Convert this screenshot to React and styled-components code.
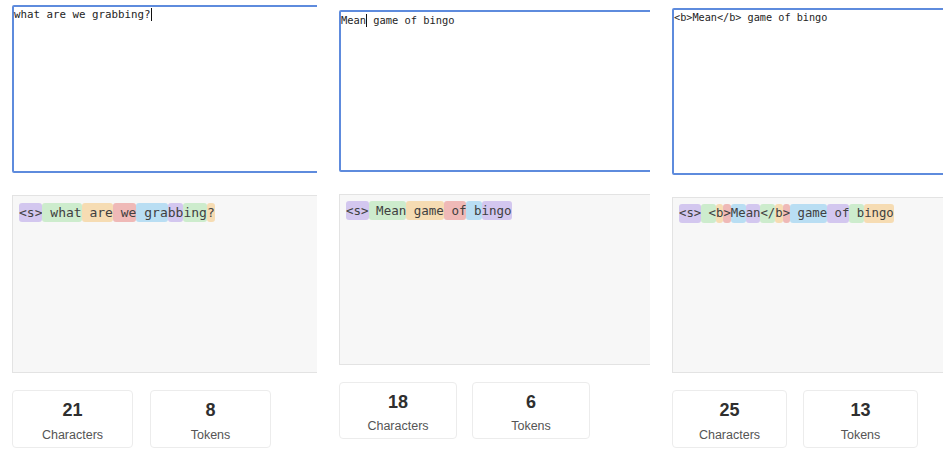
import React from 'react';
import styled, { createGlobalStyle } from 'styled-components';

const Global = createGlobalStyle`
  html, body { margin: 0; padding: 0; background: #ffffff; }
  #root { width: 943px; height: 460px; overflow: hidden; }
`;

const COLORS = ['#d3c7ef', '#cdeccd', '#f6dcb3', '#efb9b7', '#b9def3'];

const Strip = styled.div`
  display: flex;
  align-items: flex-start;
  gap: 22px;
  padding-left: 12px;
  height: 460px;
  box-sizing: border-box;
`;

const Shot = styled.section`
  flex: ${(p) => (p.$w ? `0 0 ${p.$w}px` : '1 1 0')};
  overflow: hidden;
  padding-top: ${(p) => p.$top}px;
`;

const Column = styled.div`
  width: 360px;
  display: flex;
  flex-direction: column;
  gap: 22px;
`;

const Editor = styled.div`
  height: ${(p) => p.$h}px;
  box-sizing: border-box;
  border: 2px solid #5e8bdd;
  border-radius: 2px;
  padding: 1px 0 0 0;
  font-family: 'DejaVu Sans Mono', monospace;
  font-size: ${(p) => p.$font}px;
  line-height: 14px;
  color: #1e1e1e;
  white-space: pre;
  background: #fff;
`;

const Caret = styled.span`
  display: inline-block;
  width: 1px;
  height: 13px;
  background: #111;
  vertical-align: -3px;
`;

const TokenBox = styled.div`
  height: ${(p) => p.$h}px;
  box-sizing: border-box;
  background: #f7f7f7;
  border: 1px solid #e3e3e3;
  padding: ${(p) => p.$pt}px 6px 0 6px;
  font-family: 'DejaVu Sans Mono', monospace;
  font-size: ${(p) => p.$font}px;
  line-height: 19px;
  color: #404040;
  white-space: pre;
`;

const Token = styled.span`
  display: inline-block;
  background: ${(p) => p.$bg};
  border-radius: 3px;
  height: 19px;
`;

const Stats = styled.div`
  display: flex;
  gap: ${(p) => p.$gap}px;
  margin-top: -5px;
`;

const Card = styled.div`
  width: ${(p) => p.$w}px;
  height: ${(p) => p.$h}px;
  box-sizing: border-box;
  border: 1px solid #ececec;
  border-radius: 4px;
  background: #fff;
  display: flex;
  flex-direction: column;
  align-items: center;
  padding-top: 8px;
  font-family: 'Liberation Sans', Arial, sans-serif;
`;

const Num = styled.div`
  font-size: 18px;
  font-weight: 700;
  color: #2f2f2f;
  line-height: 22px;
`;

const Label = styled.div`
  font-size: 12.5px;
  color: #555;
  line-height: 16px;
  margin-top: ${(p) => p.$mt}px;
`;

const panels = [
  {
    w: 305, top: 5, editorH: 168, editorFont: 10.8,
    before: 'what are we grabbing?', after: '', caret: true,
    tokens: ['<s>', ' what', ' are', ' we', ' gra', 'bb', 'ing', '?'],
    tokenFont: 13, boxH: 178, pt: 7,
    cardW: 121, cardH: 58, cardGap: 17, labelMt: 6,
    chars: 21, count: 8,
  },
  {
    w: 311, top: 10, editorH: 162, editorFont: 10.4,
    before: 'Mean', after: ' game of bingo', caret: true,
    tokens: ['<s>', ' Mean', ' game', ' of', ' b', 'ingo'],
    tokenFont: 12.5, boxH: 171, pt: 6,
    cardW: 118, cardH: 57, cardGap: 15, labelMt: 5,
    chars: 18, count: 6,
  },
  {
    w: 0, top: 8, editorH: 167, editorFont: 10.2,
    before: '<b>Mean</b> game of bingo', after: '', caret: false,
    tokens: ['<s>', ' <', 'b', '>', 'Me', 'an', '</', 'b', '>', ' game', ' of', ' b', 'ingo'],
    tokenFont: 12.3, boxH: 176, pt: 6,
    cardW: 115, cardH: 58, cardGap: 16, labelMt: 6,
    chars: 25, count: 13,
  },
];

function Panel({ p }) {
  return (
    <Shot $w={p.w} $top={p.top}>
      <Column>
        <Editor $h={p.editorH} $font={p.editorFont}>
          {p.before}
          {p.caret && <Caret />}
          {p.after}
        </Editor>
        <TokenBox $h={p.boxH} $font={p.tokenFont} $pt={p.pt}>
          {p.tokens.map((t, i) => (
            <Token key={i} $bg={COLORS[i % COLORS.length]}>{t}</Token>
          ))}
        </TokenBox>
        <Stats $gap={p.cardGap}>
          <Card $w={p.cardW} $h={p.cardH}>
            <Num>{p.chars}</Num>
            <Label $mt={p.labelMt}>Characters</Label>
          </Card>
          <Card $w={p.cardW} $h={p.cardH}>
            <Num>{p.count}</Num>
            <Label $mt={p.labelMt}>Tokens</Label>
          </Card>
        </Stats>
      </Column>
    </Shot>
  );
}

export default function App() {
  return (
    <>
      <Global />
      <Strip>
        {panels.map((p, i) => (
          <Panel key={i} p={p} />
        ))}
      </Strip>
    </>
  );
}
